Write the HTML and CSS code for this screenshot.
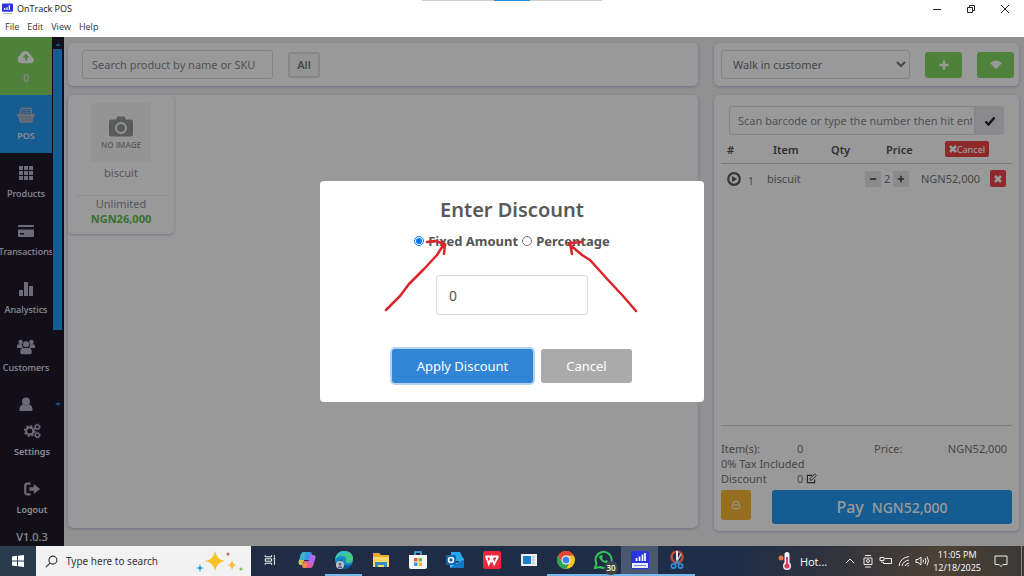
FILE: index.html
```html
<!DOCTYPE html>
<html lang="en">
<head>
    <meta charset="UTF-8">
    <meta name="viewport" content="width=device-width, initial-scale=1.0">
    <title>OnTrack POS</title>
    <link rel="stylesheet" href="styles.css">
</head>
<body>
    <header class="window-header">
        <div class="snap-bar"><span></span></div>
        <div class="title-bar">
            <svg class="app-logo" viewBox="0 0 12 12"><rect width="12" height="9" rx="1" fill="#2a35dc"/><path d="M3 7V5M5.500 7V4M8 7V2" stroke="#fff" stroke-width="1.400"/><path d="M1 11h10" stroke="#aab0f0"/></svg>
            <span class="window-title">OnTrack POS</span>
            <div class="window-controls">
                <button type="button" aria-label="Minimize"><svg viewBox="0 0 10 10"><path d="M1 5.500h8"/></svg></button>
                <button type="button" aria-label="Restore"><svg viewBox="0 0 10 10"><path d="M1.500 3.500h5v5h-5zM3.500 3V1.500h5v5H7"/></svg></button>
                <button type="button" aria-label="Close"><svg viewBox="0 0 10 10"><path d="M1 1l8 8M9 1L1 9"/></svg></button>
            </div>
        </div>
        <nav class="menu-bar">
            <a href="#">File</a>
            <a href="#">Edit</a>
            <a href="#">View</a>
            <a href="#">Help</a>
        </nav>
    </header>

    <div class="app">
        <aside class="sidebar">
            <div class="sidebar-scroll">
                <nav class="sidebar-nav">
                    <a href="#" class="nav-item sync">
                        <svg viewBox="0 0 20 16"><path fill="currentColor" fill-rule="evenodd" d="M5 15a4.500 4.500 0 0 1-1.500-8.700A5.500 5.500 0 0 1 14 4.800 4 4 0 0 1 16.500 8 3.700 3.700 0 0 1 16 15zM10 4.500L6.300 8.500h2.400V12h2.600V8.500h2.400z"/></svg>
                        <span>0</span>
                    </a>
                    <a href="#" class="nav-item active">
                        <svg viewBox="0 0 20 18"><path d="M4 8V4q0-2.500 2.500-2.500h7Q16 1.500 16 4v4" fill="none" stroke="currentColor" stroke-width="1.800"/><path d="M6 4h8M6 6h8" stroke="currentColor"/><path fill="currentColor" fill-rule="evenodd" d="M0 7.500h20V10h-1l-2 7.500H3L1 10H0zM5.500 11v1h1.500v-1zm4 0v1H11v-1zm4 0v1H15v-1zm-8 3v1h1.500v-1zm4 0v1H11v-1zm4 0v1H15v-1z"/></svg>
                        <span>POS</span>
                    </a>
                    <a href="#" class="nav-item">
                        <svg viewBox="0 0 18 18"><path fill="currentColor" d="M2 2h4v4H2zm5 0h4v4H7zm5 0h4v4h-4zM2 7h4v4H2zm5 0h4v4H7zm5 0h4v4h-4zM2 12h4v4H2zm5 0h4v4H7zm5 0h4v4h-4z"/></svg>
                        <span>Products</span>
                    </a>
                    <a href="#" class="nav-item">
                        <svg viewBox="0 0 18 18"><path fill="currentColor" fill-rule="evenodd" d="M2 3h14q1 0 1 1v1H1V4q0-1 1-1zM1 7.500h16V14q0 1-1 1H2q-1 0-1-1zM3 11v1.500h4V11z"/></svg>
                        <span>Transactions</span>
                    </a>
                    <a href="#" class="nav-item">
                        <svg viewBox="0 0 18 18"><path fill="currentColor" d="M2 10h4v6H2zM7 2h4v14H7zM12 6h4v10h-4z"/></svg>
                        <span>Analystics</span>
                    </a>
                    <a href="#" class="nav-item">
                        <svg viewBox="0 0 20 18"><g fill="currentColor"><circle cx="4" cy="3.500" r="2.500"/><circle cx="16" cy="3.500" r="2.500"/><circle cx="10" cy="6" r="3.400"/><path d="M0 10V8q0-2 2-2h3.500q0 3 1.500 4zM20 10V8q0-2-2-2h-3.500q0 3-1.500 4zM3.500 15q0-5 3.500-5h6q3.500 0 3.500 5 0 2-2 2h-9q-2 0-2-2z"/></g></svg>
                        <span>Customers</span>
                    </a>
                    <a href="#" class="nav-item" aria-label="Users">
                        <svg viewBox="0 0 18 18"><g fill="currentColor"><circle cx="9" cy="5.500" r="4"/><path d="M2.500 14q0-5 3.500-5.500 3 2 6 0 3.500.5 3.500 5.500 0 2-2 2h-9q-2 0-2-2z"/></g></svg>
                    </a>
                </nav>
                <div class="scrollbar">
                    <svg viewBox="0 0 8 8"><path d="M1 6l3-3 3 3z"/></svg>
                    <div class="scroll-thumb"></div>
                    <svg viewBox="0 0 8 8"><path d="M1 2h6L4 5z"/></svg>
                </div>
            </div>
            <a href="#" class="nav-item">
                <svg viewBox="0 0 20 18"><g fill="none" stroke="currentColor"><circle cx="7.500" cy="9" r="4" stroke-width="2.400"/><circle cx="7.500" cy="9" r="5.700" stroke-width="1.800" stroke-dasharray="2.200 2.270"/><circle cx="16" cy="4.500" r="2.200" stroke-width="1.400"/><circle cx="16" cy="4.500" r="3.200" stroke-dasharray="1.500 1.010"/><circle cx="16" cy="13.500" r="2.200" stroke-width="1.400"/><circle cx="16" cy="13.500" r="3.200" stroke-dasharray="1.500 1.010"/></g></svg>
                <span>Settings</span>
            </a>
            <a href="#" class="nav-item">
                <svg viewBox="0 0 20 18"><path d="M8.500 3H5Q2.500 3 2.500 5.500v7Q2.500 15 5 15h3.500" fill="none" stroke="currentColor" stroke-width="2.400"/><path fill="currentColor" d="M7 7h5V3.500L19 9l-7 5.500V11H7z"/></svg>
                <span>Logout</span>
            </a>
            <div class="version">V1.0.3</div>
        </aside>

        <main class="products">
            <div class="panel product-filter">
                <input type="text" class="field search" aria-label="Search products" placeholder="Search product by name or SKU">
                <button type="button" class="all-button">All</button>
            </div>
            <div class="panel product-list">
                <div class="product-card">
                    <div class="product-image">
                        <svg viewBox="0 0 24 20"><path fill="currentColor" fill-rule="evenodd" d="M2.500 3H7l1.500-3h7L17 3h4.500Q24 3 24 5.500v12q0 2.500-2.500 2.500h-19Q0 20 0 17.500v-12Q0 3 2.500 3zM12 5.500a6 6 0 1 0 0 12 6 6 0 1 0 0-12zm0 2a4 4 0 1 1 0 8 4 4 0 1 1 0-8z"/><circle cx="12" cy="11.500" r="2.500" fill="currentColor"/></svg>
                        <span>NO IMAGE</span>
                    </div>
                    <div class="product-name">biscuit</div>
                    <div class="product-info">
                        <div>Unlimited</div>
                        <strong>NGN26,000</strong>
                    </div>
                </div>
            </div>
        </main>

        <section class="cart">
            <div class="panel customer-bar">
                <select class="field" aria-label="Customer">
                    <option>Walk in customer</option>
                </select>
                <button type="button" class="green-button" aria-label="Add customer"><svg viewBox="0 0 12 12"><path d="M6 1.500v9M1.500 6h9" stroke="currentColor" stroke-width="2.400"/></svg></button>
                <button type="button" class="green-button" aria-label="Connection"><svg viewBox="0 0 12 12"><path fill="currentColor" d="M0 4q6-5 12 0L6 10.500z"/></svg></button>
            </div>
            <div class="panel cart-panel">
                <div class="barcode">
                    <input type="text" class="field" aria-label="Barcode" placeholder="Scan barcode or type the number then hit enter">
                    <button type="button" aria-label="Submit barcode"><svg viewBox="0 0 12 12"><path d="M1.500 6.500l3 3 6-7" fill="none" stroke="currentColor" stroke-width="2.400"/></svg></button>
                </div>
                <table class="cart-table">
                    <thead>
                        <tr>
                            <th>#</th>
                            <th>Item</th>
                            <th>Qty</th>
                            <th>Price</th>
                            <th><button type="button" class="red-button cancel-all"><svg viewBox="0 0 8 8"><path d="M1 1l6 6M7 1L1 7" stroke="currentColor" stroke-width="2.600"/></svg>Cancel</button></th>
                        </tr>
                    </thead>
                    <tbody>
                        <tr>
                            <td class="row-number"><svg viewBox="0 0 14 14"><circle cx="7" cy="7" r="5.800" fill="none" stroke="currentColor" stroke-width="2.200"/><path d="M5 4l5 3-5 3z" fill="currentColor"/></svg><span>1</span></td>
                            <td>biscuit</td>
                            <td>
                                <div class="stepper">
                                    <button type="button" aria-label="Less"><svg viewBox="0 0 10 10"><path d="M1 5h8" stroke="currentColor" stroke-width="2"/></svg></button>
                                    <span>2</span>
                                    <button type="button" aria-label="More"><svg viewBox="0 0 10 10"><path d="M1 5h8M5 1v8" stroke="currentColor" stroke-width="2"/></svg></button>
                                </div>
                            </td>
                            <td>NGN52,000</td>
                            <td><button type="button" class="red-button remove" aria-label="Remove biscuit"><svg viewBox="0 0 8 8"><path d="M1 1l6 6M7 1L1 7" stroke="currentColor" stroke-width="2.600"/></svg></button></td>
                        </tr>
                    </tbody>
                </table>
                <div class="totals">
                    <span>Item(s):</span><span>0</span><span>Price:</span><span class="total-price">NGN52,000</span>
                    <span class="tax">0% Tax Included</span>
                    <span>Discount</span><span>0 <svg viewBox="0 0 12 12"><path d="M9.500 7v3.500h-8v-8H7" fill="none" stroke="currentColor" stroke-width="1.300"/><path d="M4.500 7.800V6l5-5L11.300 2.800l-5 5z" fill="none" stroke="currentColor"/></svg></span>
                </div>
                <div class="pay-row">
                    <button type="button" class="hold-button" aria-label="Hold order"><svg viewBox="0 0 12 12"><path d="M3 5q0-3 3-3t3 3l1 3q-1 2-4 2T2 8zM4 6h4" fill="none" stroke="currentColor"/></svg></button>
                    <button type="button" class="pay-button"><span>Pay</span><span class="pay-amount">NGN52,000</span></button>
                </div>
            </div>
        </section>

        <div class="overlay">
            <form class="discount-dialog" role="dialog" aria-labelledby="discount-title">
                <h2 id="discount-title">Enter Discount</h2>
                <div class="discount-type">
                    <input type="radio" name="discount-type" id="fixed" checked>
                    <label for="fixed">Fixed Amount</label>
                    <input type="radio" name="discount-type" id="percentage">
                    <label for="percentage">Percentage</label>
                </div>
                <input type="text" class="discount-value" aria-label="Discount" value="0">
                <div class="dialog-buttons">
                    <button type="button" class="apply">Apply Discount</button>
                    <button type="button" class="dismiss">Cancel</button>
                </div>
                <!-- hand drawn arrows pointing at the two discount types -->
                <svg class="arrows" viewBox="0 0 384 221"><path d="M66 129L80 115 89 103 104 88 117 74 124 63M107 61L115 60 125 63 124 73M316 130L303 115 289 100 270 79 262 74 249 63M262 61L250 62 252 73"/></svg>
            </form>
        </div>
    </div>

    <footer class="taskbar">
        <button type="button" class="start" aria-label="Start"><svg viewBox="0 0 14 14"><path fill="#fff" d="M1 2.500l5-.7v4.700H1zM7 1.700L13 1v5.500H7zM1 7.500h5v4.700l-5-.7zM7 7.500h6V13l-6-.7z"/></svg></button>
        <div class="task-search">
            <svg class="lens" viewBox="0 0 14 14"><circle cx="8.500" cy="5.500" r="4.300" fill="none" stroke="#333" stroke-width="1.200"/><path d="M5.300 8.700L1 13" stroke="#333" stroke-width="1.300"/></svg>
            <input type="text" aria-label="Type here to search" placeholder="Type here to search">
            <svg class="sparkles" viewBox="0 0 48 24"><path d="M19 2q2 9 10 10-8 1-10 10-2-9-10-10 8-1 10-10z" fill="#f7c325"/><path d="M36 11q1 4 4 5-3 1-4 5-1-4-4-5 3-1 4-5z" fill="#f9bf4a"/><path d="M4 15l1 3 3 1-3 1-1 3-1-3-3-1 3-1z" fill="#2d9fd0"/><circle cx="32" cy="5" r="1.500" fill="#c86a55"/><circle cx="45" cy="20" r="1.500" fill="#8ab86a"/></svg>
        </div>
        <div class="task-icons">
            <button type="button" aria-label="Task view"><svg viewBox="0 0 20 20"><path d="M4 4v2h8V4M4 16v-2h8v2M4 8.500h8v3H4zM15.500 4v3M15.500 10v6" fill="none" stroke="#fff" stroke-width="1.200"/><path d="M14.500 7.500h2v2h-2z" fill="#fff"/></svg></button>
            <button type="button" aria-label="Copilot"><svg viewBox="0 0 20 20"><path d="M7 2h6q2 0 2 2l-2 6H7L5 15H3q-2-1-1-4l2-7q1-2 3-2z" fill="#3698e6"/><path d="M4 4q1-2 3-2h2L6 13l-3 1q-2-1-1-3z" fill="#3cb4c8"/><path d="M2 10h5l-2 5H3q-2-1-1-5z" fill="#d6c545"/><path d="M13 18H7q-2 0-2-2l2-5h5l2-6h3q2 1 1 4l-2 7q-1 2-3 2z" fill="#e65a9b"/><path d="M13 5h4q2 1 1 4l-2 5h-5z" fill="#ab6bea"/><path d="M6 13h5l-2 5H7q-3-1-1-5z" fill="#f58a48"/></svg></button>
            <button type="button" class="open" aria-label="Edge"><svg viewBox="0 0 20 20"><circle cx="10" cy="10" r="9" fill="#168ac7"/><path d="M1 10Q2 1 10 1q9 0 9 8 0 4-5 4-3 0-2-3 1-4-4-4-5 0-7 4z" fill="#43c987"/><path d="M2 9q1-6 8-8 3 0 5 2Q4 4 2 9z" fill="#36bbe0"/><path d="M8 9q-2 6 4 6 4 1 6-1-2 5-8 5-6-1-6-6 1-3 4-4z" fill="#14549f"/><circle cx="6" cy="15" r="4" fill="#bfc3c8"/><circle cx="6" cy="14" r="1.500" fill="#5b6370"/><path d="M3.500 18q2.500-4 5 0z" fill="#5b6370"/></svg></button>
            <button type="button" aria-label="File Explorer"><svg viewBox="0 0 20 20"><path d="M2 3h6l2 2h8v12H2z" fill="#e9ad2f"/><path d="M2 7h16v10H2z" fill="#ffd765"/><path d="M4 17v-5h12v5h-3v-2H7v2z" fill="#348bc8"/></svg></button>
            <button type="button" aria-label="Store"><svg viewBox="0 0 20 20"><path d="M7 6V2h6v4" fill="none" stroke="#45b3e9" stroke-width="1.500"/><path d="M1 5h18v12q0 2-2 2H3q-2 0-2-2z" fill="#f5f7f9"/><path d="M6 8h3.500v3.500H6z" fill="#ef5535"/><path d="M10.500 8H14v3.500h-3.500z" fill="#7ab53c"/><path d="M6 12.500h3.500V16H6z" fill="#2f9de1"/><path d="M10.500 12.500H14V16h-3.500z" fill="#f8b82e"/></svg></button>
            <button type="button" aria-label="Outlook"><svg viewBox="0 0 20 20"><path d="M6 2h9l3 6v3H6z" fill="#28a8ea"/><path d="M5 8l7 5 7-5v10H5z" fill="#45c2f3"/><path d="M5 18l14-9v9z" fill="#1378ca"/><rect x="1" y="5" width="10" height="10" rx="1" fill="#0868b7"/><circle cx="6" cy="10" r="2.500" fill="none" stroke="#fff" stroke-width="1.500"/></svg></button>
            <button type="button" aria-label="WPS Office"><svg viewBox="0 0 20 20"><rect x="1" y="1" width="18" height="18" rx="2" fill="#ed263c"/><path d="M3.500 6.500H8l1.500 4 1.500-4h5.500M4 6.500L6.800 14l2.700-7 2.700 7L16 6.500" fill="none" stroke="#fff" stroke-width="1.900"/></svg></button>
            <button type="button" aria-label="Run"><svg viewBox="0 0 20 20"><path d="M2 4h16v12H2z" fill="#eef3f7"/><path d="M4 6h8v8H4z" fill="#1e80c8"/><path d="M13 7h3M13 10h3M13 13h3" stroke="#87a4b8"/></svg></button>
            <button type="button" class="open" aria-label="Chrome"><svg viewBox="0 0 20 20"><circle cx="10" cy="10" r="9" fill="#f9c426"/><path d="M2.200 5.500A9 9 0 0 1 17.800 5.500H10L6 12z" fill="#e34435"/><path d="M2.200 5.500A9 9 0 0 0 10 19l4-7H6z" fill="#2da553"/><circle cx="10" cy="10" r="4.500" fill="#fff"/><circle cx="10" cy="10" r="3.500" fill="#3f82ea"/></svg></button>
            <button type="button" class="open" aria-label="WhatsApp"><svg viewBox="0 0 20 20"><path d="M2 18l1.500-4.500A8 8 0 1 1 7 17z" fill="#1e2c42" stroke="#36c25b" stroke-width="2"/><path d="M7 5.500q-2 2 1 5t6 2.500l1-2-2-1-1 1q-2-.5-3-3l1-1-1-2z" fill="#36c25b"/></svg><span class="badge">30</span></button>
            <button type="button" class="open current" aria-label="OnTrack POS"><svg viewBox="0 0 20 20"><rect x="1" y="1" width="18" height="18" rx="1" fill="#2835e4"/><path d="M6.500 11V8M9.500 11V6.500M12.500 11V4.500M15 11V3" stroke="#fff" stroke-width="1.700"/><path d="M2 13h16v5H2z" fill="#eef0ff"/><path d="M4 15.500h12" stroke="#7d86e9"/></svg></button>
            <button type="button" class="open" aria-label="Snipping Tool"><svg viewBox="0 0 20 20"><circle cx="10" cy="7" r="5.500" fill="none" stroke="#b94c38" stroke-width="2.600"/><path d="M10 1v11" stroke="#e8e8e8" stroke-width="2"/><path d="M14 4l-5 9" stroke="#ccc" stroke-width="1.500"/><g fill="none" stroke="#338bd3" stroke-width="1.700"><circle cx="6.500" cy="16" r="2.200"/><circle cx="13.500" cy="16" r="2.200"/><path d="M8 14l2-3 2 3"/></g></svg></button>
        </div>
        <div class="tray">
            <button type="button" class="weather"><svg viewBox="0 0 16 20"><circle cx="4" cy="7" r="2.500" fill="#ec7540"/><rect x="7.500" y="1" width="5" height="14" rx="2.500" fill="#eef1f5"/><circle cx="10" cy="15" r="4" fill="#eef1f5"/><path d="M10 6v8" stroke="#e23a58" stroke-width="2"/><circle cx="10" cy="15" r="2.600" fill="#e23a58"/></svg>Hot...</button>
            <div class="tray-icons">
                <svg viewBox="0 0 14 14"><path d="M3 9l4-4 4 4"/></svg>
                <svg viewBox="0 0 14 14"><path d="M3 4h8v6.500H3zM4 1.500h6M4 13h6"/><circle cx="7" cy="7" r="1.500"/></svg>
                <svg viewBox="0 0 14 14"><path d="M6 4.500h6.500v5h-8V8M1 3.500h4v3H1zM3 6v3"/></svg>
                <svg viewBox="0 0 14 14"><path d="M2 12Q3 4 12 2.500M5 12q1-5 7-6M8 12q1-2.500 4-3M10.500 12l1.500-.5"/></svg>
                <svg viewBox="0 0 14 14"><path d="M1 5.500h2L6 3v8L3 8.500H1zM8 5.500q1 1.500 0 3M10 4q2 3 0 6M12 2.500q3 4.500 0 9"/></svg>
            </div>
            <div class="clock"><span>11:05 PM</span><span>12/18/2025</span></div>
            <button type="button" class="notifications" aria-label="Notifications"><svg viewBox="0 0 14 14"><path d="M1 2h12v8.500H9L7 12.500l-2-2H1z" fill="none" stroke="#eee"/></svg></button>
        </div>
    </footer>
</body>
</html>
```
FILE: styles.css
```css
* {
    box-sizing: border-box;
}

body {
    margin: 0;
    height: 100vh;
    display: flex;
    flex-direction: column;
    font-family: "Noto Sans", sans-serif;
    font-size: 11px;
    color: #76767a;
    overflow: hidden;
}

button,
input,
select {
    font-family: inherit;
    font-size: inherit;
    color: inherit;
}

button {
    border: none;
    padding: 0;
    display: flex;
    align-items: center;
    justify-content: center;
    cursor: pointer;
}

a {
    color: inherit;
    text-decoration: none;
}

/* window frame */
.window-header {
    position: relative;
    height: 37px;
    background: #fff;
    color: #111;
    font-family: "Open Sans", sans-serif;
    font-size: 9px;
}

.snap-bar {
    position: absolute;
    top: 0;
    left: 50%;
    width: 180px;
    margin-left: -90px;
    height: 1px;
    background: #ccc;
    display: flex;
    justify-content: center;
}

.snap-bar span {
    width: 36px;
    background: #2a8ad4;
}

.title-bar {
    display: flex;
    align-items: center;
    height: 17px;
    padding: 0 2px;
}

.app-logo {
    width: 11px;
    height: 12px;
    margin-right: 4px;
}

.window-controls {
    margin-left: auto;
    display: flex;
}

.window-controls button {
    width: 34px;
    height: 16px;
    background: none;
}

.window-controls svg {
    width: 10px;
    height: 10px;
    fill: none;
    stroke: #222;
}

.menu-bar {
    display: flex;
    gap: 8px;
    padding: 4px 5px;
    line-height: 12px;
    color: #333;
}

/* app */
.app {
    position: relative;
    flex: 1;
    min-height: 0;
    display: flex;
    background: #f2f2f4;
}

.sidebar {
    width: 64px;
    display: flex;
    flex-direction: column;
    background: #1e1a2b;
    color: #e4e4ee;
    font-size: 9px;
    font-weight: 600;
}

.sidebar-scroll {
    flex: 1;
    min-height: 0;
    display: flex;
    overflow: hidden;
}

.sidebar-nav {
    width: 52px;
    overflow: hidden;
    font-weight: 500;
}

.nav-item {
    height: 58px;
    flex-shrink: 0;
    display: flex;
    flex-direction: column;
    align-items: center;
    gap: 6px;
    padding-top: 11px;
    line-height: 12px;
}

.nav-item svg {
    width: 18px;
    height: 18px;
    flex-shrink: 0;
    color: #b4b4c6;
}

.nav-item.sync {
    background: #82d860;
    font-size: 10px;
}

.nav-item.sync svg {
    color: #fff;
}

.nav-item.active {
    background: #2299f4;
    font-weight: 600;
}

.scrollbar {
    width: 12px;
    padding: 3px 2px 2px 1px;
    display: flex;
    flex-direction: column;
    align-items: center;
}

.scrollbar svg {
    width: 8px;
    height: 8px;
    flex-shrink: 0;
    fill: #2287d0;
}

.scroll-thumb {
    width: 100%;
    height: 281px;
    margin: 1px 0 auto;
    background: #2299f4;
}

.version {
    height: 19px;
    line-height: 19px;
    text-align: center;
    font-size: 11px;
    font-weight: 500;
}

.panel {
    background: #fff;
    border-radius: 5px;
    box-shadow: 0 1px 3px #b8b8e0;
}

.products {
    flex: 1;
    display: flex;
    flex-direction: column;
    gap: 9px;
    padding: 6px 16px 18px 4px;
}

.product-filter,
.customer-bar {
    height: 43px;
    flex-shrink: 0;
    display: flex;
    align-items: center;
}

.product-filter {
    gap: 15px;
    padding: 0 14px;
}

.field {
    height: 29px;
    border: 1px solid #dcdce2;
    border-radius: 3px;
    background: #fff;
    padding: 0 9px;
    min-width: 0;
}

.field::placeholder {
    color: #8a8a90;
}

.search {
    width: 191px;
}

.all-button {
    width: 32px;
    height: 26px;
    border: 2px solid #e2e2e4;
    border-radius: 3px;
    background: #f8f8f8;
    font-weight: 600;
}

.product-list {
    flex: 1;
}

.product-card {
    width: 106px;
    height: 139px;
    padding: 8px;
    display: flex;
    flex-direction: column;
    align-items: center;
    border-radius: 5px;
    box-shadow: 0 1px 3px #c4c4e4;
    color: #909096;
}

.product-image {
    width: 60px;
    height: 60px;
    display: flex;
    flex-direction: column;
    align-items: center;
    justify-content: center;
    gap: 3px;
    background: #f7f7f9;
    color: #979a97;
    font: 600 8px/10px "Open Sans", sans-serif;
}

.product-image svg {
    width: 24px;
    height: 21px;
}

.product-name {
    margin-top: 3px;
    line-height: 16px;
}

.product-info {
    width: 92px;
    margin-top: 14px;
    border-top: 1px solid #ededf0;
    text-align: center;
    line-height: 15px;
}

.product-info strong {
    display: block;
    color: #5cbc48;
}

.cart {
    width: 310px;
    display: flex;
    flex-direction: column;
    gap: 9px;
    padding: 6px 5px 15px 0;
}

.customer-bar {
    gap: 15px;
    padding: 0 5px 0 7px;
}

.customer-bar select {
    flex: 1;
    padding: 0 7px;
}

.green-button {
    width: 37px;
    height: 26px;
    border-radius: 3px;
    background: #82d860;
    color: #fff;
}

.green-button svg,
.barcode svg {
    width: 12px;
    height: 12px;
}

.cart-panel {
    flex: 1;
    display: flex;
    flex-direction: column;
    padding: 11px 7px 7px;
}

.barcode {
    display: flex;
    margin: 0 8px;
}

.barcode input {
    flex: 1;
    padding: 0 2px 0 8px;
    border-radius: 3px 0 0 3px;
}

.barcode button {
    width: 29px;
    height: 29px;
    border-radius: 0 3px 3px 0;
    background: #e6e6ea;
    color: #222;
}

.cart-table {
    display: block;
}

.cart-table thead,
.cart-table tbody {
    display: block;
}

.cart-table tr {
    display: grid;
    align-items: center;
    height: 29px;
}

.cart-table thead tr {
    grid-template-columns: 46px 58px 55px 59px 1fr;
    padding-left: 6px;
    border-bottom: 1px solid #d0d0d4;
}

.cart-table tbody tr {
    grid-template-columns: 40px 98px 56px 69px 1fr;
    padding-left: 6px;
}

.cart-table th {
    padding: 0;
    text-align: left;
    font-weight: 600;
    color: #505054;
}

.cart-table td {
    padding: 0;
}

.red-button {
    border-radius: 2px;
    background: #f04349;
    color: #fff;
}

.red-button svg {
    width: 8px;
    height: 8px;
}

.cancel-all {
    width: 44px;
    height: 16px;
    font-size: 9px;
    font-weight: 500;
}

.remove {
    width: 16px;
    height: 17px;
}

.row-number {
    display: flex;
    align-items: center;
    gap: 7px;
}

.row-number svg {
    width: 14px;
    height: 14px;
    color: #5c5c60;
}

.row-number span {
    padding-top: 4px;
    font-size: 10px;
}

.stepper {
    display: flex;
    align-items: center;
    gap: 3px;
}

.stepper button {
    width: 16px;
    height: 16px;
    background: #e8e8ea;
    color: #444;
}

.stepper svg {
    width: 8px;
    height: 8px;
}

.totals {
    margin-top: auto;
    padding: 15px 5px 4px 0;
    border-top: 1px solid #d0d0d4;
    display: grid;
    grid-template-columns: 76px 77px 1fr auto;
    line-height: 15px;
}

.totals .tax {
    grid-column: 1 / -1;
}

.totals svg {
    width: 11px;
    height: 11px;
    vertical-align: -1px;
    color: #444;
}

.pay-row {
    display: flex;
    gap: 21px;
}

.hold-button {
    width: 30px;
    height: 30px;
    border-radius: 3px;
    background: #fbb735;
    color: #fff;
}

.hold-button svg {
    width: 12px;
    height: 12px;
}

.pay-button {
    flex: 1;
    height: 34px;
    gap: 8px;
    border-radius: 3px;
    background: #2299f4;
    color: #fff;
    font-size: 16px;
    font-weight: 500;
}

.pay-amount {
    font-size: 14px;
}

/* discount dialog */
.overlay {
    position: absolute;
    inset: 0;
    display: flex;
    align-items: center;
    justify-content: center;
    background: rgba(0, 0, 0, 0.4);
}

.discount-dialog {
    position: relative;
    width: 384px;
    padding: 15px 15px 19px;
    display: flex;
    flex-direction: column;
    align-items: center;
    border-radius: 4px;
    background: #fff;
    color: #545454;
}

.discount-dialog h2 {
    margin: 0;
    font-size: 20px;
    font-weight: 600;
    line-height: 28px;
    color: #595959;
}

.discount-type {
    display: flex;
    align-items: center;
    gap: 4px;
    margin-top: 7px;
    font-size: 13px;
    font-weight: 700;
    line-height: 20px;
}

.discount-type input {
    width: 10px;
    height: 10px;
    margin: 0;
}

.discount-value {
    width: 152px;
    height: 40px;
    margin: 24px 0 34px;
    padding: 0 12px;
    border: 1px solid #d9d9d9;
    border-radius: 3px;
    font-size: 14px;
}

.dialog-buttons {
    display: flex;
    gap: 8px;
}

.dialog-buttons button {
    height: 34px;
    border-radius: 3px;
    color: #fff;
    font-size: 13px;
    font-weight: 400;
}

.dialog-buttons .apply {
    width: 141px;
    background: #3085d6;
    box-shadow: 0 0 0 2px #b5d3ef;
}

.dialog-buttons .dismiss {
    width: 91px;
    background: #aaa;
}

.arrows {
    position: absolute;
    inset: 0;
    fill: none;
    stroke: #dc2429;
    stroke-width: 2.500;
    stroke-linecap: round;
    stroke-linejoin: round;
    pointer-events: none;
}

/* taskbar */
.taskbar {
    height: 30px;
    display: flex;
    background: linear-gradient(90deg, #202c42 0%, #1f2d48 72%, #33343c 82%, #4b4136 92%, #3b3835 100%);
    color: #fff;
    font-family: "Open Sans", sans-serif;
}

.taskbar button {
    background: none;
}

.taskbar .start {
    width: 36px;
    background: #2c3a4e;
}

.start svg {
    width: 14px;
    height: 14px;
}

.task-search {
    width: 215px;
    display: flex;
    align-items: center;
    padding: 0 7px 0 9px;
    background: #f2f2f2;
}

.lens {
    width: 13px;
    height: 13px;
}

.task-search input {
    flex: 1;
    min-width: 0;
    padding: 0 8px;
    border: none;
    background: none;
    font-family: "Noto Sans", sans-serif;
    font-size: 10px;
}

.task-search input::placeholder {
    color: #333;
}

.sparkles {
    width: 48px;
    height: 24px;
}

.task-icons {
    display: flex;
}

.task-icons button {
    position: relative;
    width: 37px;
    border-bottom: 2px solid transparent;
}

.task-icons svg {
    width: 20px;
    height: 20px;
}

.task-icons button:first-child svg {
    width: 16px;
    height: 16px;
}

.task-icons .open {
    border-bottom-color: #76b9ed;
}

.task-icons .current {
    background: #4b5870;
}

.badge {
    position: absolute;
    right: 3px;
    bottom: -1px;
    width: 14px;
    height: 14px;
    border-radius: 50%;
    background: #3c4248;
    font-size: 8px;
    font-weight: 600;
    line-height: 14px;
}

.tray {
    margin-left: auto;
    display: flex;
    align-items: center;
    padding-right: 2px;
}

.weather {
    gap: 7px;
}

.weather svg {
    width: 16px;
    height: 20px;
}

.tray-icons {
    display: flex;
    gap: 4px;
    margin: 0 4px 0 16px;
}

.tray-icons svg {
    width: 14px;
    height: 14px;
    fill: none;
    stroke: #eee;
}

.clock {
    display: flex;
    flex-direction: column;
    align-items: center;
    font-size: 9px;
    line-height: 13px;
}

.notifications {
    width: 41px;
    height: 30px;
    border-right: 1px solid #888;
}

.notifications svg {
    width: 14px;
    height: 14px;
}
```
